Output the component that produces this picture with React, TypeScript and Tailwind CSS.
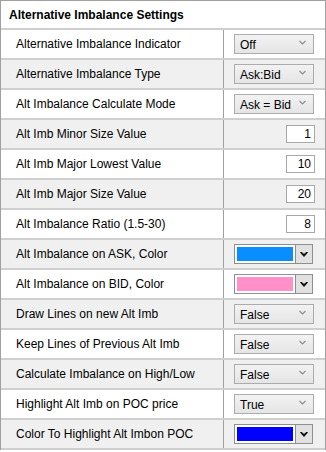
import React from 'react'

type Row =
  | { label: string; kind: 'select'; value: string }
  | { label: string; kind: 'number'; value: string }
  | { label: string; kind: 'color'; value: string }

const rows: Row[] = [
  { label: 'Alternative Imbalance Indicator', kind: 'select', value: 'Off' },
  { label: 'Alternative Imbalance Type', kind: 'select', value: 'Ask:Bid' },
  { label: 'Alt Imbalance Calculate Mode', kind: 'select', value: 'Ask = Bid' },
  { label: 'Alt Imb Minor Size Value', kind: 'number', value: '1' },
  { label: 'Alt Imb Major Lowest Value', kind: 'number', value: '10' },
  { label: 'Alt Imb Major Size Value', kind: 'number', value: '20' },
  { label: 'Alt Imbalance Ratio (1.5-30)', kind: 'number', value: '8' },
  { label: 'Alt Imbalance on ASK, Color', kind: 'color', value: '#0a8eff' },
  { label: 'Alt Imbalance on BID, Color', kind: 'color', value: '#ff90c9' },
  { label: 'Draw Lines on new Alt Imb', kind: 'select', value: 'False' },
  { label: 'Keep Lines of Previous Alt Imb', kind: 'select', value: 'False' },
  { label: 'Calculate Imbalance on High/Low', kind: 'select', value: 'False' },
  { label: 'Highlight Alt Imb on POC price', kind: 'select', value: 'True' },
  { label: 'Color To Highlight Alt Imbon POC', kind: 'color', value: '#0000ff' },
]

function Select({ value }: { value: string }) {
  return (
    <div className="ml-[10px] flex h-[20px] w-[80px] items-center justify-between border border-[#acacac] bg-gradient-to-b from-[#f2f2f2] to-[#e5e5e5] pl-[5px] pr-[7px]">
      <span className="pt-[2px]">{value}</span>
      <svg width="7" height="5" viewBox="0 0 7 5" className="mt-[-3px]">
        <path d="M0.5 1 L3.5 4 L6.5 1" fill="none" stroke="#8a8a8a" strokeWidth="1.1" />
      </svg>
    </div>
  )
}

function NumberBox({ value }: { value: string }) {
  return (
    <div className="ml-auto mr-[10px] flex h-[18px] w-[29px] items-center justify-end border border-[#a8a8a8] bg-white pr-[3px]">
      {value}
    </div>
  )
}

function ColorPick({ value }: { value: string }) {
  return (
    <div className="ml-[10px] flex h-[20px] w-[79px] border border-[#8f8f8f]">
      <div className="h-full w-[60px] border-2 border-white bg-white">
        <div className="h-full w-full" style={{ backgroundColor: value }} />
      </div>
      <div className="flex flex-1 items-center justify-center border-l border-[#8f8f8f] bg-[#e1e1e1]">
        <svg width="8" height="5" viewBox="0 0 8 5">
          <path d="M0.5 0.5 L4 4.5 L7.5 0.5 L6 0.5 L4 2.5 L2 0.5 Z" fill="#000" stroke="#000" strokeWidth="0.8" strokeLinejoin="round" />
        </svg>
      </div>
    </div>
  )
}

export default function App() {
  return (
    <div className="h-[452px] w-[326px] overflow-hidden bg-white font-['Liberation_Sans',sans-serif] text-[12px] text-black">
      <div className="border-x border-t border-[#a0a0a0]">
        <div className="flex h-[29px] items-center border-b-2 border-[#cfcfcf] pl-[8px] font-bold">
          Alternative Imbalance Settings
        </div>
        {rows.map((r, i) => (
          <div
            key={r.label}
            className={`grid h-[30px] grid-cols-[223px_1fr] border-b-2 border-[#cfcfcf] ${i % 2 === 1 ? 'bg-[#f0f0f0]' : 'bg-white'}`}
          >
            <div className="flex items-center border-r border-[#a0a0a0] pl-[15px]">{r.label}</div>
            <div className="flex items-center">
              {r.kind === 'select' && <Select value={r.value} />}
              {r.kind === 'number' && <NumberBox value={r.value} />}
              {r.kind === 'color' && <ColorPick value={r.value} />}
            </div>
          </div>
        ))}
      </div>
    </div>
  )
}
